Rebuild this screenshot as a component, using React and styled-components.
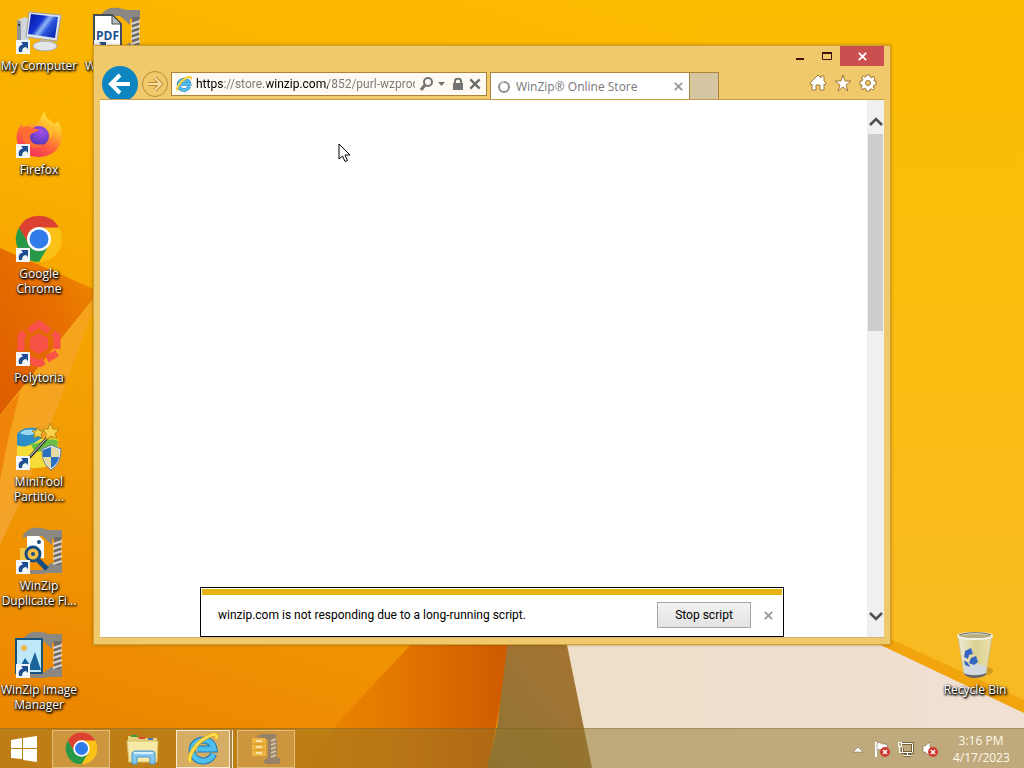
import React from 'react';
import styled, { createGlobalStyle } from 'styled-components';

const GlobalStyle = createGlobalStyle`
  * { box-sizing: border-box; }
  body {
    margin: 0;
    font-family: "Open Sans", "Noto Sans", sans-serif;
    font-size: 12px;
    line-height: 15px;
    color: #000;
  }
  button, input { font: inherit; color: inherit; }
  button { padding: 0; border: 0; background: none; }
  svg { display: block; flex: none; }
`;

const Desktop = styled.main`
  position: relative;
  display: flex;
  flex-direction: column;
  min-height: 100vh;
  overflow: hidden;
  background: #fbb400;
`;

const Backdrop = styled.svg`
  position: absolute;
  inset: 0;
  width: 100%;
  height: 100%;
`;

const Shortcuts = styled.div`
  position: relative;
  flex: 1;
  display: flex;
  align-items: flex-start;
`;

const ShortcutColumn = styled.div`
  display: flex;
  flex-direction: column;
  width: 78px;
  margin-left: ${(p) => (p.$end ? 'auto' : '0')};
  margin-right: ${(p) => (p.$end ? '10px' : '0')};
  align-self: ${(p) => (p.$end ? 'flex-end' : 'flex-start')};
`;

const ShortcutItem = styled.button`
  display: flex;
  flex-direction: column;
  align-items: center;
  height: 104px;
  padding-top: 7px;
  gap: 3px;
  color: #fff;
`;

const ShortcutLabel = styled.span`
  white-space: pre;
  text-align: center;
  text-shadow: 1px 1px 2px #000, 0 1px 2px #000, 1px 1px 3px #000;
`;

const Window = styled.section`
  position: absolute;
  left: 93px;
  right: 133px;
  top: 45px;
  bottom: 123px;
  display: flex;
  flex-direction: column;
  padding: 0 6px 6px;
  border: 1px solid #cf9f34;
  background: #efc96c;
  box-shadow: 0 0 3px rgba(120, 70, 0, 0.5);
`;

const CaptionBar = styled.div`
  display: flex;
  justify-content: flex-end;
  height: 20px;
`;

const CaptionButton = styled.button`
  display: grid;
  place-items: center;
  width: ${(p) => (p.$close ? '44px' : '27px')};
  background: ${(p) => (p.$close ? '#c9504f' : 'transparent')};
`;

const NavBar = styled.div`
  display: flex;
  align-items: center;
  height: 33px;
  padding: 0 7px 0 2px;
  overflow: hidden;
`;

const BackButton = styled.button`
  display: grid;
  place-items: center;
  align-self: flex-start;
  flex: none;
  width: 36px;
  height: 36px;
  border-radius: 50%;
  background: #0f86bf;
`;

const ForwardButton = styled.button`
  display: grid;
  place-items: center;
  flex: none;
  width: 26px;
  height: 26px;
  margin: 3px 3px 0 4px;
  border: 1px solid #bd8c35;
  border-radius: 50%;
`;

const AddressBar = styled.form`
  display: flex;
  align-items: center;
  flex: 8 1 0;
  max-width: 316px;
  height: 24px;
  margin-top: 3px;
  padding: 0 4px;
  gap: 4px;
  border: 1px solid #ad8438;
  background: #fef9f1;
`;

const AddressInput = styled.input`
  flex: 1;
  min-width: 0;
  height: 20px;
  padding: 0;
  border: 0;
  outline: 0;
  font-family: Roboto, "Open Sans", sans-serif;
  background: linear-gradient(90deg, #000 0 28px, #777 28px 71px, #000 71px 132px, #777 132px);
  background-clip: text;
  -webkit-background-clip: text;
  -webkit-text-fill-color: transparent;
`;

const AddressTool = styled.button`
  display: grid;
  place-items: center;
  height: 20px;
  flex: none;
`;

const TabStrip = styled.div`
  display: flex;
  align-self: flex-end;
  height: 27px;
  margin-left: 3px;
`;

const Tab = styled.div`
  display: flex;
  align-items: center;
  gap: 5px;
  width: 200px;
  padding: 1px 5px 0 6px;
  border: 1px solid #ad8438;
  border-bottom: 0;
  background: #fff;
  color: #777;
`;

const TabTitle = styled.span`
  flex: 1;
  white-space: nowrap;
`;

const NewTab = styled.button`
  width: 29px;
  border: 1px solid #ad8438;
  border-width: 1px 1px 0 0;
  background: #d5c5a0;
`;

const BrowserTools = styled.div`
  display: flex;
  gap: 7px;
  margin: 0 0 0 auto;
`;

const Page = styled.div`
  flex: 1;
  display: flex;
  border-top: 1px solid #c79d4b;
  border-bottom: 1px solid #d8b46a;
  background: #fff;
`;

const PageBody = styled.div`
  flex: 1;
  display: flex;
  flex-direction: column;
  justify-content: flex-end;
  padding: 0 83px 0 100px;
`;

const Notice = styled.div`
  border: 1px solid #000;
  padding: 1px;
  font-family: Roboto, "Open Sans", sans-serif;
`;

const NoticeStripe = styled.div`
  height: 6px;
  background: #e5b313;
`;

const NoticeRow = styled.div`
  display: flex;
  align-items: center;
  height: 40px;
  padding: 0 8px 0 16px;
`;

const NoticeText = styled.span`
  flex: 1;
`;

const StopButton = styled.button`
  width: 94px;
  height: 26px;
  margin-right: 12px;
  border: 1px solid #a5a5a5;
  background: linear-gradient(#f2f2f2, #e3e3e3);
`;

const IconButton = styled.button`
  display: grid;
  place-items: center;
`;

const Scrollbar = styled.div`
  display: flex;
  flex-direction: column;
  width: 17px;
  padding: 10px 0;
  background: #f0f0f0;
`;

const ScrollArrow = styled.button`
  display: grid;
  place-items: center;
  height: 23px;
`;

const ScrollTrack = styled.div`
  flex: 1;
  padding: 1px 1px 0;
`;

const ScrollThumb = styled.div`
  height: 42%;
  background: #cdcdcd;
`;

const Pointer = styled.svg`
  position: absolute;
  left: 338px;
  top: 143px;
`;

const Taskbar = styled.footer`
  position: relative;
  display: flex;
  align-items: center;
  height: 40px;
  padding-right: 15px;
  border-top: 1px solid rgba(110, 90, 40, 0.3);
  background: rgba(142, 116, 42, 0.5);
  color: #fff9e8;
`;

const TaskButton = styled.button`
  display: grid;
  place-items: center;
  width: ${(p) => p.$width || 58}px;
  height: 38px;
  margin-right: ${(p) => p.$gap || 0}px;
  border: 1px solid ${(p) => (p.$active ? '#f6ead2' : p.$open ? 'rgba(240, 216, 165, 0.6)' : 'transparent')};
  background: ${(p) => (p.$active ? 'rgba(240, 220, 180, 0.5)' : p.$open ? 'rgba(230, 195, 140, 0.35)' : 'transparent')};
  box-shadow: ${(p) => (p.$active ? '2px 0 0 #a98448, 3px 0 0 #f6ead2' : 'none')};
`;

const Tray = styled.div`
  display: flex;
  align-items: center;
  gap: 6px;
  margin-left: auto;
`;

const Clock = styled.time`
  display: flex;
  flex-direction: column;
  width: 56px;
  margin-left: 8px;
  line-height: 17px;
  text-align: center;
  white-space: nowrap;
`;

const Wallpaper = () => (
  <Backdrop viewBox="0 0 1024 768" preserveAspectRatio="none" aria-hidden="true">
    <defs>
      <linearGradient id="wBase" x1="0.7" y1="0" x2="0.3" y2="1">
        <stop offset="0" stopColor="#fdbc00" />
        <stop offset="0.4" stopColor="#fab000" />
        <stop offset="0.75" stopColor="#f29a05" />
        <stop offset="1" stopColor="#ec8800" />
      </linearGradient>
      <linearGradient id="wRight" x1="0" y1="0" x2="0" y2="1">
        <stop offset="0" stopColor="#fcbc00" />
        <stop offset="0.5" stopColor="#fabd12" />
        <stop offset="1" stopColor="#f6b92a" />
      </linearGradient>
      <linearGradient id="wFold" x1="1" y1="0" x2="0" y2="1">
        <stop offset="0" stopColor="#f09000" />
        <stop offset="0.4" stopColor="#e87000" />
        <stop offset="1" stopColor="#dc5c00" />
      </linearGradient>
      <linearGradient id="wStreak" x1="0" y1="0" x2="0.5" y2="1">
        <stop offset="0" stopColor="#f9a60a" />
        <stop offset="1" stopColor="#f2a235" />
      </linearGradient>
      <linearGradient id="wRed" x1="0" y1="0" x2="1" y2="0">
        <stop offset="0" stopColor="#ec8700" />
        <stop offset="0.4" stopColor="#e57a00" />
        <stop offset="1" stopColor="#cf5900" />
      </linearGradient>
      <linearGradient id="wBrown" x1="0" y1="1" x2="1" y2="0">
        <stop offset="0" stopColor="#8f7436" />
        <stop offset="1" stopColor="#a87431" />
      </linearGradient>
      <linearGradient id="wCream" x1="0" y1="0" x2="1" y2="0">
        <stop offset="0" stopColor="#eedfc9" />
        <stop offset="1" stopColor="#f0e0d3" />
      </linearGradient>
    </defs>
    <rect width="1024" height="768" fill="url(#wBase)" />
    <rect x="700" width="324" height="768" fill="url(#wRight)" />
    <path d="M0 248L60 274L100 292L0 415Z" fill="url(#wFold)" />
    <path d="M100 290L0 415V545L22 498L60 400Z" fill="url(#wStreak)" />
    <path d="M0 415L20 392L8 440L0 480Z" fill="#f0840a" />
    <path d="M300 768L345 715L415 640H512L488 768Z" fill="url(#wRed)" />
    <path d="M508 640H567L593 768H487L497 728Z" fill="url(#wBrown)" />
    <path d="M566 640H870L1024 710V768H592Z" fill="url(#wCream)" />
    <path d="M866 638H888L1024 700V713Z" fill="#f2a40c" />
  </Backdrop>
);

const ShortcutArrow = () => (
  <g>
    <rect x="1" y="33" width="14" height="14" fill="#f3f4f6" />
    <path d="M4 45C3 40 5 38 8 37.5L6 35H13V42L11 40C8 40.500 7 42 7 45Z" fill="#1b4f8f" />
  </g>
);

const Clamp = () => (
  <g>
    <path d="M8 8C13 1 19 0 26 1L34 3H47V12H37V18L27 9H14L8 11Z" fill="#8b8783" />
    <path d="M14 43H27L36 36V36H47V46H34L27 47H16Z" fill="#8b8783" />
    <path d="M39 10H46V38H39Z" fill="#6e6b68" />
    <path d="M38 17L47 14M38 22L47 19M38 27L47 24M38 32L47 29M38 37L47 34" stroke="#d9d5cf" strokeWidth="2" />
  </g>
);

const Icon48 = ({ children, plain }) => (
  <svg width="48" height="48" viewBox="0 0 48 48" aria-hidden="true">
    {children}
    {!plain && <ShortcutArrow />}
  </svg>
);

const ComputerIcon = () => (
  <Icon48>
    <defs>
      <linearGradient id="screen" x1="0" y1="0" x2="1" y2="0.6">
        <stop offset="0" stopColor="#0414a0" />
        <stop offset="0.45" stopColor="#1334d4" />
        <stop offset="0.6" stopColor="#8fb4f4" />
        <stop offset="0.75" stopColor="#2a56dc" />
        <stop offset="1" stopColor="#1030b8" />
      </linearGradient>
    </defs>
    <path d="M2 13L10 10L14 12V34L2 33Z" fill="#d3d6d8" />
    <path d="M2 13L6 14V33H2Z" fill="#8f9497" />
    <circle cx="4" cy="18" r="1" fill="#222" />
    <path d="M14 5L46 8L42 34L11 30Z" fill="#dfe2e6" stroke="#9ca3aa" />
    <path d="M16 7L43 10L40 31L13 27Z" fill="url(#screen)" />
    <path d="M25 33L34 34L35 40H25Z" fill="#c2c6c9" />
    <ellipse cx="30" cy="39" rx="12" ry="5" fill="#e3e5e6" stroke="#a7aaac" />
  </Icon48>
);

const PdfIcon = () => (
  <Icon48>
    <Clamp />
    <path d="M1 8H19L28 17V47H1Z" fill="#fff" stroke="#444c55" strokeWidth="2" />
    <path d="M19 8V17H28Z" fill="#b9bdc2" stroke="#444c55" />
    <text x="3" y="33" fontFamily="Open Sans, sans-serif" fontWeight="700" fontSize="12" fill="#1b4f93">PDF</text>
  </Icon48>
);

const FirefoxIcon = () => (
  <Icon48>
    <defs>
      <linearGradient id="ff" x1="0.8" y1="0" x2="0.3" y2="1">
        <stop offset="0" stopColor="#fff04a" />
        <stop offset="0.35" stopColor="#ffb52b" />
        <stop offset="0.65" stopColor="#ff6538" />
        <stop offset="1" stopColor="#f02f64" />
      </linearGradient>
      <radialGradient id="ffCore" cx="0.6" cy="0.3" r="0.8">
        <stop offset="0" stopColor="#a050e8" />
        <stop offset="1" stopColor="#4b35b5" />
      </radialGradient>
    </defs>
    <path d="M30 0C29 7 35 8 39 13L43 10C50 23 47 37 36 43C25 49 9 46 3 34C0 26 2 18 7 12L8 17L13 14C18 12 23 13 25 10C25 6 28 3 30 0Z" fill="url(#ff)" />
    <circle cx="24" cy="25" r="10" fill="url(#ffCore)" />
    <path d="M6 17C12 13 16 18 24 18C23 22 16 21 15 25C15 32 20 35 28 33C25 38 12 39 8 28Z" fill="#ff6c35" />
    <path d="M24 14C30 12 37 19 35 28C40 20 35 12 28 11Z" fill="#ffbd32" />
  </Icon48>
);

const ChromeLogo = () => (
  <g>
    <circle cx="24" cy="24" r="23" fill="#fbc116" />
    <path d="M4 12.500A23 23 0 0 1 44 12.500H24V24Z" fill="#dd4132" />
    <path d="M4 12.500L14 30L24 24V12.500Z" fill="#dd4132" />
    <path d="M4 12.500L14.500 30L24 35L34 30L24 47A23 23 0 0 1 4 12.500Z" fill="#279847" />
    <circle cx="24" cy="24" r="12" fill="#fff" />
    <circle cx="24" cy="24" r="9.500" fill="#2f7be8" />
  </g>
);

const PolytoriaIcon = () => (
  <Icon48>
    <g fill="none" stroke="#f95248" strokeWidth="7">
      <path d="M14 12L24 5L34 12" />
      <path d="M38 14L42 17V30" />
      <path d="M42 34L34 39L32 40" />
      <path d="M29 42L24 45L14 40" />
      <path d="M10 14L6 17V32" />
    </g>
    <path d="M24 14L33 19V30L24 35L15 30V19Z" fill="#f95248" />
  </Icon48>
);

const MiniToolIcon = () => (
  <Icon48>
    <path d="M2 12C5 3 24 3 27 9V22L2 30Z" fill="#2c8fc8" />
    <path d="M5 10C9 5 21 6 24 9C18 13 9 13 5 10Z" fill="#9bd7ef" />
    <path d="M2 22C10 26 18 21 25 16L43 15V36L30 44C20 46 8 46 2 36Z" fill="#f5dc39" />
    <path d="M15 20C24 23 33 12 43 18L42 26L20 29Z" fill="#68bf43" />
    <path d="M13 36L33 14" stroke="#333" strokeWidth="3" />
    <path d="M14 34L32 15" stroke="#eee" />
    <path d="M35 0L38 6L44 6L40 11L42 16L36 13L31 17L31 10L27 6H33ZM23 4L25 8H29L26 11L27 15L23 13L19 15L20 10L17 8H21Z" fill="#f8d24a" stroke="#b88612" />
    <path d="M36 22L46 26C46 36 43 43 36 47C29 42 27 35 27 26Z" fill="#dfe7ed" stroke="#6c7b87" />
    <path d="M36 24V34H28L28 27ZM36 34H44C43 39 40 43 36 45Z" fill="#2b6fc1" />
    <path d="M36 24L44 27V34H36ZM28 34H36V45C32 42 29 39 28 34Z" fill="#e3dba0" />
  </Icon48>
);

const DuplicateIcon = () => (
  <Icon48>
    <Clamp />
    <path d="M12 9H24L29 14V31H12Z" fill="#fff" />
    <path d="M5 21H18V35H5Z" fill="#efc54b" />
    <circle cx="24" cy="15" r="2" fill="#174e82" />
    <circle cx="18" cy="27" r="7" fill="#f4bd45" stroke="#174e82" strokeWidth="3" />
    <circle cx="18" cy="27" r="2" fill="#174e82" />
    <path d="M23 33L32 42" stroke="#174e82" strokeWidth="5" />
  </Icon48>
);

const ImageManagerIcon = () => (
  <Icon48>
    <Clamp />
    <rect x="1" y="8" width="26" height="34" fill="#bfe9fb" stroke="#17527d" strokeWidth="2" />
    <circle cx="9" cy="17" r="3" fill="#f0b44e" />
    <path d="M3 39L10 27L15 34L20 21L26 39Z" fill="#17639a" />
  </Icon48>
);

const RecycleIcon = () => (
  <Icon48 plain>
    <defs>
      <linearGradient id="bin" x1="0" y1="0" x2="1" y2="0">
        <stop offset="0" stopColor="#eeeddc" />
        <stop offset="0.5" stopColor="#dcd193" />
        <stop offset="1" stopColor="#eadfa8" />
      </linearGradient>
    </defs>
    <ellipse cx="35" cy="40" rx="7" ry="4" fill="#a27a22" opacity="0.5" />
    <path d="M7 5H41L35 43C30 47 17 47 13 43Z" fill="url(#bin)" stroke="#c8c09a" />
    <path d="M13 36C19 32 29 32 35 36L34 43C28 47 18 47 14 43Z" fill="#d3d9df" />
    <path d="M13 42C18 45 29 45 35 42V44C29 48 18 48 14 44Z" fill="#65676a" />
    <ellipse cx="24" cy="5" rx="17" ry="3" fill="#b6ad80" stroke="#f3f0e4" strokeWidth="2" />
    <path d="M8 4C15 1 33 1 40 4" fill="none" stroke="#67645c" />
    <path d="M14 20L20 17L22 23L18 24L17 28L13 26ZM20 27L25 25L27 31L23 34L18 32ZM13 29L17 32L19 36L14 34Z" fill="#3564c4" />
  </Icon48>
);

const IeLogo = ({ size }) => (
  <svg width={size} height={size} viewBox="0 0 32 32" aria-hidden="true">
    <path d="M26.500 21A11 10.500 0 1 1 27 16H10" fill="none" stroke="#1b78b8" strokeWidth="7" />
    <path d="M26.500 21A11 10.500 0 1 1 27 16H10" fill="none" stroke="#4fc0ee" strokeWidth="5" />
    <path d="M4 29C-1 26 8 10 20 4C27 0 31 1 29 6" fill="none" stroke="#d99c10" strokeWidth="4" />
    <path d="M4 29C-1 26 8 10 20 4C27 0 31 1 29 6" fill="none" stroke="#ffdc4b" strokeWidth="3" />
  </svg>
);

const ExplorerIcon = () => (
  <svg width="34" height="32" viewBox="0 0 34 32" aria-hidden="true">
    <path d="M2 3H10L12 5H31V29H2Z" fill="#e6d27a" />
    <path d="M5 3H11" stroke="#3a9c45" strokeWidth="2" />
    <path d="M13 5H19" stroke="#d54a35" strokeWidth="2" />
    <path d="M22 6H27" stroke="#4b78b8" strokeWidth="2" />
    <path d="M1 8H32L31 29H3Z" fill="#f6eaa6" stroke="#d8bf68" />
    <path d="M6 31V21C6 19 8 18 10 18H26C28 18 29 19 29 21V31H24V24H11V31Z" fill="#85c8ef" stroke="#4a95cc" />
    <path d="M8 20H27" stroke="#d8f1fc" strokeWidth="2" />
  </svg>
);

const WinZipTaskIcon = () => (
  <svg width="32" height="32" viewBox="0 0 32 32" aria-hidden="true" opacity="0.85">
    <path d="M5 4L12 1H26V7H18L14 5ZM13 28L18 25V6H27V25H30V31H16Z" fill="#8c7f70" />
    <path d="M21 8L26 6M21 12L26 10M21 16L26 14M21 20L26 18M21 24L26 22" stroke="#d3c5ae" strokeWidth="2" />
    <rect x="2" y="5" width="14" height="18" rx="1" fill="#f6bd42" />
    <path d="M3 11H15M3 17H15" stroke="#c88d1e" />
    <path d="M6 8H12M6 14H12M6 20H12" stroke="#fff0c0" strokeWidth="2" />
  </svg>
);

const Cross = ({ size, color, width = 2 }) => (
  <svg width={size} height={size} viewBox="0 0 12 12" aria-hidden="true">
    <path d="M2 2L10 10M10 2L2 10" stroke={color} strokeWidth={width} />
  </svg>
);

const Chevron = ({ down }) => (
  <svg width="14" height="10" viewBox="0 0 14 10" aria-hidden="true">
    <path d={down ? 'M1 2L7 8L13 2' : 'M1 8L7 2L13 8'} fill="none" stroke="#505050" strokeWidth="2.500" />
  </svg>
);

const ErrorBadge = () => (
  <g>
    <circle cx="12" cy="12" r="5" fill="#cf3a32" />
    <path d="M10 10L14 14M14 10L10 14" stroke="#fff" strokeWidth="1.500" />
  </g>
);

const TrayIcon = ({ children }) => (
  <svg width="18" height="18" viewBox="0 0 18 18" aria-hidden="true">{children}</svg>
);

const shortcuts = [
  { label: 'My Computer', icon: ComputerIcon },
  { label: 'Firefox', icon: FirefoxIcon },
  { label: 'Google\nChrome', icon: () => <Icon48><ChromeLogo /></Icon48> },
  { label: 'Polytoria', icon: PolytoriaIcon },
  { label: 'MiniTool\nPartitio...', icon: MiniToolIcon },
  { label: 'WinZip\nDuplicate Fi...', icon: DuplicateIcon },
  { label: 'WinZip Image\nManager', icon: ImageManagerIcon },
];

const Shortcut = ({ label, icon: Icon }) => (
  <ShortcutItem type="button">
    <Icon />
    <ShortcutLabel>{label}</ShortcutLabel>
  </ShortcutItem>
);

const toolPaint = { fill: '#fff', stroke: '#a37a34', strokeWidth: 1 };

export default function App() {
  return (
    <>
      <GlobalStyle />
      <Desktop>
        <Wallpaper />
        <Shortcuts>
          <ShortcutColumn>
            {shortcuts.map((s) => <Shortcut key={s.label} {...s} />)}
          </ShortcutColumn>
          <ShortcutColumn>
            <Shortcut label="WinZip PDF" icon={PdfIcon} />
          </ShortcutColumn>
          <ShortcutColumn $end>
            <Shortcut label="Recycle Bin" icon={RecycleIcon} />
          </ShortcutColumn>
        </Shortcuts>

        <Window aria-label="WinZip Online Store">
          <CaptionBar>
            <CaptionButton type="button" aria-label="Minimize">
              <svg width="12" height="12" viewBox="0 0 12 12"><path d="M2 9H10" stroke="#3d1208" strokeWidth="2" /></svg>
            </CaptionButton>
            <CaptionButton type="button" aria-label="Maximize">
              <svg width="12" height="12" viewBox="0 0 12 12"><path d="M1.500 2V9.500H10.500V2" fill="none" stroke="#3d1208" /><path d="M1 3H11" stroke="#3d1208" strokeWidth="2" /></svg>
            </CaptionButton>
            <CaptionButton type="button" aria-label="Close" $close>
              <Cross size={11} color="#fff" />
            </CaptionButton>
          </CaptionBar>

          <NavBar>
            <BackButton type="button" aria-label="Back">
              <svg width="24" height="24" viewBox="0 0 24 24"><path d="M22 12H4M12 3L3 12L12 21" fill="none" stroke="#fff" strokeWidth="4" /></svg>
            </BackButton>
            <ForwardButton type="button" aria-label="Forward">
              <svg width="18" height="18" viewBox="0 0 18 18">
                <path d="M2 9H14M9 3L15 9L9 15" fill="none" stroke="#bd8c35" strokeWidth="4" />
                <path d="M2 9H14M9 3L15 9L9 15" fill="none" stroke="#f9dfa0" strokeWidth="2" />
              </svg>
            </ForwardButton>
            <AddressBar onSubmit={(e) => e.preventDefault()}>
              <IeLogo size={16} />
              <AddressInput aria-label="Address" defaultValue="https://store.winzip.com/852/purl-wzprod" />
              <AddressTool type="button" aria-label="Search">
                <svg width="14" height="14" viewBox="0 0 14 14"><circle cx="9" cy="5" r="4" fill="none" stroke="#737373" strokeWidth="2" /><path d="M6 8L2 13" stroke="#737373" strokeWidth="3" /></svg>
              </AddressTool>
              <AddressTool type="button" aria-label="Show address history">
                <svg width="9" height="6" viewBox="0 0 9 6"><path d="M1 1H8L4.500 5Z" fill="#737373" /></svg>
              </AddressTool>
              <AddressTool type="button" aria-label="Security report">
                <svg width="14" height="14" viewBox="0 0 14 14"><path d="M5 7V4C5 1 11 1 11 4V7" fill="none" stroke="#737373" strokeWidth="2" /><rect x="3" y="6" width="10" height="7" fill="#737373" /></svg>
              </AddressTool>
              <AddressTool type="button" aria-label="Stop">
                <Cross size={14} color="#6b6b6b" />
              </AddressTool>
            </AddressBar>
            <TabStrip>
              <Tab>
                <svg width="14" height="14" viewBox="0 0 14 14" aria-hidden="true">
                  <circle cx="7" cy="7" r="5" fill="none" stroke="#8a8f96" strokeWidth="2" />
                  <path d="M3.500 3.500A5 5 0 0 1 7 2" fill="none" stroke="#c4c8cc" strokeWidth="2" />
                </svg>
                <TabTitle>WinZip® Online Store</TabTitle>
                <IconButton type="button" aria-label="Close tab"><Cross size={11} color="#999" /></IconButton>
              </Tab>
              <NewTab type="button" aria-label="New tab" />
            </TabStrip>
            <BrowserTools>
              <IconButton type="button" aria-label="Home">
                <svg width="18" height="18" viewBox="0 0 18 18"><path d="M1 9L9 1L12 4V2H15V7L17 9L16 11L15 10V16H11V11H7V16H3V10L2 11Z" {...toolPaint} /></svg>
              </IconButton>
              <IconButton type="button" aria-label="Favorites">
                <svg width="18" height="18" viewBox="0 0 18 18"><path d="M9 1L11 7H17L12 11L14 17L9 13L4 17L6 11L1 7H7Z" {...toolPaint} /></svg>
              </IconButton>
              <IconButton type="button" aria-label="Tools">
                <svg width="18" height="18" viewBox="0 0 18 18">
                  <path d="M7 1H11L11 3L13 4L14 2L16 4L15 6L15 7L17 7V11L15 11L14 13L16 14L14 16L12 15L11 15V17H7V15L5 14L4 16L2 14L3 12L3 11H1V7H3L4 5L2 4L4 2L6 3L7 3Z" {...toolPaint} />
                  <circle cx="9" cy="9" r="2.500" fill="#efc96c" stroke="#a37a34" />
                </svg>
              </IconButton>
            </BrowserTools>
          </NavBar>

          <Page>
            <PageBody>
              <Notice role="alert">
                <NoticeStripe />
                <NoticeRow>
                  <NoticeText>winzip.com is not responding due to a long-running script.</NoticeText>
                  <StopButton type="button">Stop script</StopButton>
                  <IconButton type="button" aria-label="Dismiss"><Cross size={11} color="#999" /></IconButton>
                </NoticeRow>
              </Notice>
            </PageBody>
            <Scrollbar>
              <ScrollArrow type="button" aria-label="Scroll up"><Chevron /></ScrollArrow>
              <ScrollTrack><ScrollThumb /></ScrollTrack>
              <ScrollArrow type="button" aria-label="Scroll down"><Chevron down /></ScrollArrow>
            </Scrollbar>
          </Page>
        </Window>

        <Taskbar>
          <TaskButton type="button" aria-label="Start" $width={48} $gap={4}>
            <svg width="28" height="28" viewBox="0 0 28 28"><path d="M1 5L12 3V13H1ZM13 3L27 1V13H13ZM1 14H12V24L1 23ZM13 14H27V27L13 25Z" fill="#fff" /></svg>
          </TaskButton>
          <TaskButton type="button" aria-label="Google Chrome" $open $gap={4}>
            <svg width="33" height="33" viewBox="0 0 48 48"><ChromeLogo /></svg>
          </TaskButton>
          <TaskButton type="button" aria-label="File Explorer" $gap={4}><ExplorerIcon /></TaskButton>
          <TaskButton type="button" aria-label="Internet Explorer" $active $width={54} $gap={7}><IeLogo size={32} /></TaskButton>
          <TaskButton type="button" aria-label="WinZip" $open><WinZipTaskIcon /></TaskButton>
          <Tray>
            <IconButton type="button" aria-label="Show hidden icons">
              <svg width="14" height="8" viewBox="0 0 14 8"><path d="M0 7L5 2L10 7Z" fill="#fff" stroke="#6f5d38" strokeWidth="0.500" /></svg>
            </IconButton>
            <IconButton type="button" aria-label="Action Center">
              <TrayIcon>
                <path d="M3 2V17" stroke="#fff" strokeWidth="2" />
                <path d="M4 3C7 1 8 5 14 4V11C9 12 8 8 4 10Z" fill="#fff" stroke="#6f5d38" strokeWidth="0.500" />
                <ErrorBadge />
              </TrayIcon>
            </IconButton>
            <IconButton type="button" aria-label="Network">
              <TrayIcon>
                <path d="M5 3.500H15.500V12.500H5.500V8M10.500 12V15M7 15.500H14" fill="none" stroke="#5d4c2b" strokeWidth="2.500" />
                <path d="M5 3.500H15.500V12.500H5.500V8M10.500 12V15M7 15.500H14M2.500 7V12.500H5M1.500 2.500H4.500V6.500H1.500Z" fill="none" stroke="#fff" />
              </TrayIcon>
            </IconButton>
            <IconButton type="button" aria-label="Volume">
              <TrayIcon>
                <path d="M2 6H4L9 2V16L4 12H2Z" fill="#fff" stroke="#6f5d38" strokeWidth="0.500" />
                <ErrorBadge />
              </TrayIcon>
            </IconButton>
            <Clock dateTime="2023-04-17T15:16">
              <span>3:16 PM</span>
              <span>4/17/2023</span>
            </Clock>
          </Tray>
        </Taskbar>

        <Pointer width="14" height="20" viewBox="0 0 14 20" aria-hidden="true">
          <path d="M1 1V16L4.500 13L7 18.500L9.500 17.500L7 12H12Z" fill="#fff" stroke="#000" />
        </Pointer>
      </Desktop>
    </>
  );
}
